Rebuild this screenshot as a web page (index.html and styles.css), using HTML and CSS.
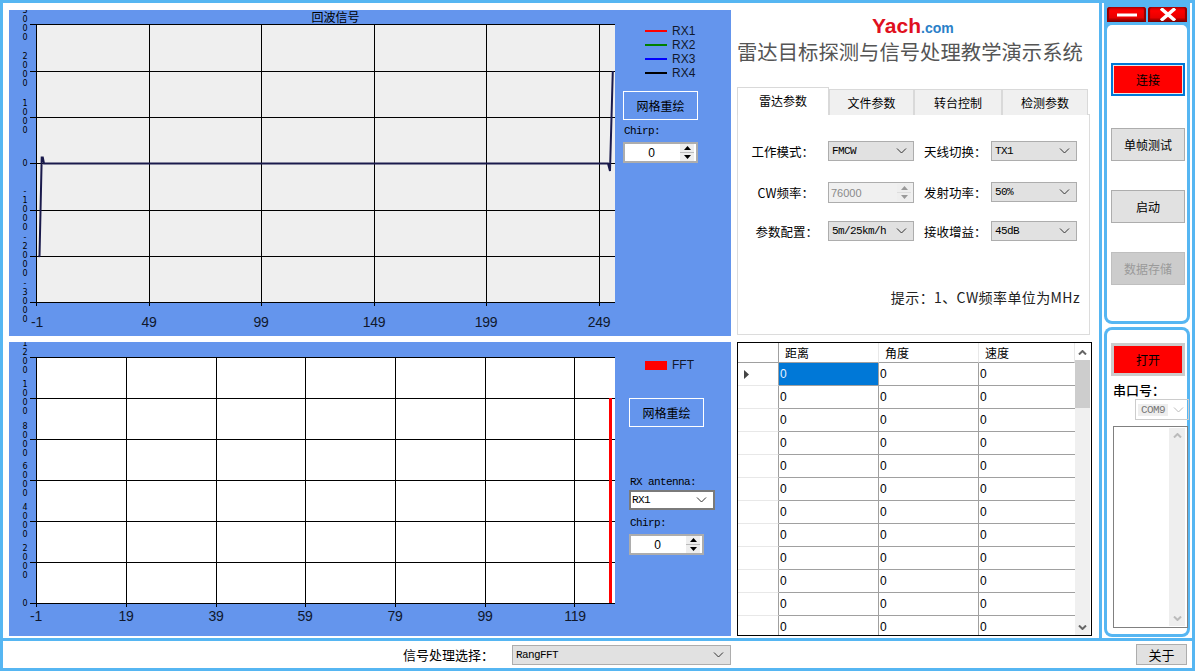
FILE: index.html
```html
<!DOCTYPE html>
<html lang="zh-CN">
<head>
    <meta charset="UTF-8">
    <meta name="viewport" content="width=device-width, initial-scale=1.0">
    <title>雷达目标探测与信号处理教学演示系统</title>
    <link rel="stylesheet" href="styles.css">
</head>
<body>
    <svg class="defs" width="0" height="0">
        <symbol id="chev" viewBox="0 0 11 6"><path d="M1 .5 5.5 5 10 .5" fill="none" stroke="currentColor" stroke-width="1"/></symbol>
        <symbol id="chev-bold" viewBox="0 0 9 5"><path d="M1 .5 4.5 4 8 .5" fill="none" stroke="currentColor" stroke-width="2"/></symbol>
        <symbol id="up" viewBox="0 0 7 4"><path d="M3.5 0 7 4H0z"/></symbol>
        <symbol id="down" viewBox="0 0 7 4"><path d="M0 0H7L3.5 4z"/></symbol>
    </svg>

    <div class="app">
        <div class="main">
            <div class="workspace">

                <!-- echo signal chart -->
                <section class="chart-panel">
                    <svg class="plot" width="613" height="326" viewBox="9 10 613 326">
                        <rect class="plot-bg-grey" x="36" y="24" width="579" height="278"/>
                        <path class="grid" d="M36.5 24V306M149.5 24V306M261.5 24V306M374.5 24V306M486.5 24V306M599.5 24V306M30 24.5H615M30 71.5H615M30 117.5H615M30 163.5H615M30 210.5H615M30 256.5H615M30 302.5H615"/>
                        <polyline class="signal" points="38.5,256.5 39.5,256 41.7,157.5 42.8,157.5 44,163.5 608,163.5 610,171 612.8,71"/>
                        <text class="plot-title" x="335.5" y="22">回波信号</text>
                        <g class="y-label">
                            <text y="13"><tspan x="25">3</tspan><tspan x="25" dy="9">0</tspan><tspan x="25" dy="9">0</tspan><tspan x="25" dy="9">0</tspan></text>
                            <text y="59"><tspan x="25">2</tspan><tspan x="25" dy="9">0</tspan><tspan x="25" dy="9">0</tspan><tspan x="25" dy="9">0</tspan></text>
                            <text y="106"><tspan x="25">1</tspan><tspan x="25" dy="9">0</tspan><tspan x="25" dy="9">0</tspan><tspan x="25" dy="9">0</tspan></text>
                            <text x="25" y="166">0</text>
                            <text y="194"><tspan x="25">-</tspan><tspan x="25" dy="9">1</tspan><tspan x="25" dy="9">0</tspan><tspan x="25" dy="9">0</tspan><tspan x="25" dy="9">0</tspan></text>
                            <text y="240"><tspan x="25">-</tspan><tspan x="25" dy="9">2</tspan><tspan x="25" dy="9">0</tspan><tspan x="25" dy="9">0</tspan><tspan x="25" dy="9">0</tspan></text>
                            <text y="286"><tspan x="25">-</tspan><tspan x="25" dy="9">3</tspan><tspan x="25" dy="9">0</tspan><tspan x="25" dy="9">0</tspan><tspan x="25" dy="9">0</tspan></text>
                        </g>
                        <g class="x-label">
                            <text x="37" y="327">-1</text>
                            <text x="149" y="327">49</text>
                            <text x="261" y="327">99</text>
                            <text x="374" y="327">149</text>
                            <text x="486" y="327">199</text>
                            <text x="599" y="327">249</text>
                        </g>
                    </svg>
                    <div class="chart-side">
                        <ul class="legend">
                            <li><i class="legend-line rx1"></i>RX1</li>
                            <li><i class="legend-line rx2"></i>RX2</li>
                            <li><i class="legend-line rx3"></i>RX3</li>
                            <li><i class="legend-line rx4"></i>RX4</li>
                        </ul>
                        <button class="btn-outline">网格重绘</button>
                        <label class="mono-label">Chirp:</label>
                        <div class="spinner">
                            <span class="spinner-value">0</span>
                            <span class="spin-btns">
                                <span><svg width="7" height="4"><use href="#up"/></svg></span>
                                <span><svg width="7" height="4"><use href="#down"/></svg></span>
                            </span>
                        </div>
                    </div>
                </section>

                <!-- title and parameter tabs -->
                <section class="info-panel">
                    <div class="logo"><span class="logo-name">Yach</span><span class="logo-domain">.com</span></div>
                    <h1 class="app-title">雷达目标探测与信号处理教学演示系统</h1>
                    <div class="tabs">
                        <div class="tab active">雷达参数</div>
                        <div class="tab tab-file">文件参数</div>
                        <div class="tab tab-turn">转台控制</div>
                        <div class="tab tab-detect">检测参数</div>
                    </div>
                    <div class="tab-body">
                        <div class="form-grid">
                            <label>工作模式：</label>
                            <div class="combo"><span>FMCW</span><svg width="11" height="6"><use href="#chev"/></svg></div>
                            <label class="label-right">天线切换：</label>
                            <div class="combo"><span>TX1</span><svg width="11" height="6"><use href="#chev"/></svg></div>

                            <label>CW频率：</label>
                            <div class="freq-input">
                                <span>76000</span>
                                <span class="spin-btns">
                                    <span><svg width="7" height="4"><use href="#up"/></svg></span>
                                    <span><svg width="7" height="4"><use href="#down"/></svg></span>
                                </span>
                            </div>
                            <label class="label-right">发射功率：</label>
                            <div class="combo"><span>50%</span><svg width="11" height="6"><use href="#chev"/></svg></div>

                            <label class="label-shift">参数配置：</label>
                            <div class="combo"><span>5m/25km/h</span><svg width="11" height="6"><use href="#chev"/></svg></div>
                            <label class="label-right">接收增益：</label>
                            <div class="combo"><span>45dB</span><svg width="11" height="6"><use href="#chev"/></svg></div>
                        </div>
                        <p class="hint">提示：1、CW频率单位为MHz</p>
                    </div>
                </section>

                <!-- FFT chart -->
                <section class="chart-panel">
                    <svg class="plot" width="613" height="294" viewBox="9 342 613 294">
                        <rect class="plot-bg-white" x="36" y="357" width="579" height="246"/>
                        <path class="grid" d="M36.5 357V607M126.5 357V607M216.5 357V607M305.5 357V607M395.5 357V607M485.5 357V607M574.5 357V607M30 357.5H615M30 398.5H615M30 439.5H615M30 480.5H615M30 521.5H615M30 562.5H615M30 603.5H615"/>
                        <rect class="fft-bar" x="609" y="398" width="3" height="205"/>
                        <g class="y-label">
                            <text y="346"><tspan x="25">1</tspan><tspan x="25" dy="9">2</tspan><tspan x="25" dy="9">0</tspan><tspan x="25" dy="9">0</tspan></text>
                            <text y="387"><tspan x="25">1</tspan><tspan x="25" dy="9">0</tspan><tspan x="25" dy="9">0</tspan><tspan x="25" dy="9">0</tspan></text>
                            <text y="429"><tspan x="25">8</tspan><tspan x="25" dy="9">0</tspan><tspan x="25" dy="9">0</tspan><tspan x="25" dy="9">0</tspan></text>
                            <text y="469"><tspan x="25">6</tspan><tspan x="25" dy="9">0</tspan><tspan x="25" dy="9">0</tspan><tspan x="25" dy="9">0</tspan></text>
                            <text y="510"><tspan x="25">4</tspan><tspan x="25" dy="9">0</tspan><tspan x="25" dy="9">0</tspan><tspan x="25" dy="9">0</tspan></text>
                            <text y="551"><tspan x="25">2</tspan><tspan x="25" dy="9">0</tspan><tspan x="25" dy="9">0</tspan><tspan x="25" dy="9">0</tspan></text>
                            <text x="25" y="606">0</text>
                        </g>
                        <g class="x-label">
                            <text x="36" y="621">-1</text>
                            <text x="126" y="621">19</text>
                            <text x="216" y="621">39</text>
                            <text x="305" y="621">59</text>
                            <text x="395" y="621">79</text>
                            <text x="485" y="621">99</text>
                            <text x="575" y="621">119</text>
                        </g>
                    </svg>
                    <div class="chart-side chart-side-fft">
                        <ul class="legend">
                            <li><i class="legend-swatch"></i>FFT</li>
                        </ul>
                        <button class="btn-outline">网格重绘</button>
                        <label class="mono-label label-rx">RX antenna:</label>
                        <div class="combo combo-rx"><span>RX1</span><svg width="11" height="6"><use href="#chev"/></svg></div>
                        <label class="mono-label">Chirp:</label>
                        <div class="spinner">
                            <span class="spinner-value">0</span>
                            <span class="spin-btns">
                                <span><svg width="7" height="4"><use href="#up"/></svg></span>
                                <span><svg width="7" height="4"><use href="#down"/></svg></span>
                            </span>
                        </div>
                    </div>
                </section>

                <!-- result grid -->
                <section class="grid-view">
                    <table>
                        <thead>
                            <tr><th class="row-head"></th><th>距离</th><th>角度</th><th>速度</th></tr>
                        </thead>
                        <tbody>
                            <tr class="selected"><td class="row-head"><svg class="row-arrow" width="5" height="9"><path d="M0 0 5 4.5 0 9z"/></svg></td><td>0</td><td>0</td><td>0</td></tr>
                            <tr><td class="row-head"></td><td>0</td><td>0</td><td>0</td></tr>
                            <tr><td class="row-head"></td><td>0</td><td>0</td><td>0</td></tr>
                            <tr><td class="row-head"></td><td>0</td><td>0</td><td>0</td></tr>
                            <tr><td class="row-head"></td><td>0</td><td>0</td><td>0</td></tr>
                            <tr><td class="row-head"></td><td>0</td><td>0</td><td>0</td></tr>
                            <tr><td class="row-head"></td><td>0</td><td>0</td><td>0</td></tr>
                            <tr><td class="row-head"></td><td>0</td><td>0</td><td>0</td></tr>
                            <tr><td class="row-head"></td><td>0</td><td>0</td><td>0</td></tr>
                            <tr><td class="row-head"></td><td>0</td><td>0</td><td>0</td></tr>
                            <tr><td class="row-head"></td><td>0</td><td>0</td><td>0</td></tr>
                            <tr><td class="row-head"></td><td>0</td><td>0</td><td>0</td></tr>
                        </tbody>
                    </table>
                    <div class="scrollbar">
                        <span class="scroll-arrow"><svg width="9" height="5"><use href="#chev-bold"/></svg></span>
                        <span class="scroll-thumb"></span>
                        <span class="scroll-arrow arrow-end"><svg width="9" height="5"><use href="#chev-bold"/></svg></span>
                    </div>
                </section>
            </div>

            <aside class="sidebar">
                <div class="frame frame-top">
                    <div class="win-buttons">
                        <span class="win-btn"><svg width="22" height="10"><path d="M1 5H21" stroke="#fff" stroke-width="3"/></svg></span>
                        <span class="win-btn"><svg width="18" height="13"><path d="M2 .5 16 12.500M16 .5 2 12.500" stroke="#fff" stroke-width="3.500"/></svg></span>
                    </div>
                    <div class="frame-body actions">
                        <button class="btn btn-connect">连接</button>
                        <button class="btn">单帧测试</button>
                        <button class="btn">启动</button>
                        <button class="btn btn-disabled">数据存储</button>
                    </div>
                </div>
                <div class="frame frame-serial">
                    <div class="frame-body serial">
                        <button class="btn btn-open">打开</button>
                        <label class="serial-label">串口号：</label>
                        <div class="com-combo"><span>COM9</span><svg width="11" height="6"><use href="#chev"/></svg></div>
                        <div class="log-box">
                            <div class="log-scroll">
                                <svg width="9" height="5"><use href="#chev-bold"/></svg>
                                <svg width="9" height="5"><use href="#chev-bold"/></svg>
                            </div>
                        </div>
                    </div>
                </div>
            </aside>
        </div>

        <footer class="footer">
            <label class="footer-label">信号处理选择：</label>
            <div class="combo combo-mode"><span>RangFFT</span><svg width="11" height="6"><use href="#chev"/></svg></div>
            <button class="btn-about">关于</button>
        </footer>
    </div>
</body>
</html>
```

FILE: styles.css
```css
* {
    box-sizing: border-box;
}

body {
    margin: 0;
    background-color: #fff;
    color: #000;
    font-family: "Noto Sans CJK SC", "Liberation Sans", sans-serif;
    font-size: 12px;
}

button {
    font-family: inherit;
    font-size: 12px;
    padding: 0;
}

.defs {
    position: absolute;
}

.app {
    display: flex;
    flex-direction: column;
    width: 1195px;
    height: 671px;
    border: 3px solid #56b6f2;
    overflow: hidden;
}

.main {
    display: flex;
    height: 638px;
    border-bottom: 3px solid #56b6f2;
}

.workspace {
    display: grid;
    grid-template-columns: 722px 355px;
    grid-template-rows: 326px 294px;
    gap: 6px;
    width: 1096px;
    padding: 7px 0 0 6px;
}

/* charts */
.chart-panel {
    display: flex;
    background-color: #6495ed;
    overflow: hidden;
}

.plot {
    flex: none;
    display: block;
}

.plot-bg-grey {
    fill: #efefef;
}

.plot-bg-white {
    fill: #fff;
}

.grid {
    fill: none;
    stroke: #000;
    stroke-width: 1;
}

.signal {
    fill: none;
    stroke: #1a1a4c;
    stroke-width: 2;
}

.fft-bar {
    fill: #f00;
}

.plot-title {
    font-size: 12px;
    text-anchor: middle;
}

.y-label text {
    font-family: "DejaVu Sans", sans-serif;
    font-size: 8px;
    text-anchor: middle;
}

.x-label text {
    font-family: "Liberation Sans", sans-serif;
    font-size: 14px;
    letter-spacing: -.3px;
    fill: #10182c;
    text-anchor: middle;
}

.chart-side {
    flex: none;
    width: 96px;
    padding: 14px 0 0 1px;
}

.chart-side-fft {
    padding: 16px 0 0 7px;
}

.legend {
    list-style: none;
    margin: 0 0 11px;
    padding: 0 0 0 22px;
    font-family: "Liberation Sans", sans-serif;
    color: #10182c;
}

.legend li {
    display: flex;
    align-items: center;
    gap: 5px;
    height: 14px;
}

.legend-line {
    width: 22px;
    height: 2px;
}

.rx1 { background-color: #f00; }
.rx2 { background-color: #008000; }
.rx3 { background-color: #00f; }
.rx4 { background-color: #000; }

.legend-swatch {
    width: 22px;
    height: 9px;
    background-color: #f00;
}

.chart-side-fft .legend {
    margin-bottom: 26px;
    padding-left: 16px;
}

.btn-outline {
    display: block;
    width: 75px;
    height: 29px;
    border: 1px solid #fff;
    background: transparent;
    color: #000;
}

.mono-label {
    display: block;
    height: 22px;
    padding: 4px 0 0 1px;
    font-family: "Liberation Mono", monospace;
    font-size: 11px;
    letter-spacing: -.6px;
    line-height: 14px;
}

.label-rx {
    margin-top: 47px;
    height: 16px;
    padding-top: 1px;
}

.spinner {
    display: flex;
    align-items: center;
    width: 75px;
    height: 21px;
    border: 2px solid #adadad;
    background-color: #fff;
}

.spinner-value {
    width: 53px;
    text-align: center;
    font-family: "Liberation Sans", sans-serif;
    font-size: 12px;
}

.spin-btns {
    display: flex;
    flex-direction: column;
    gap: 1px;
    width: 14px;
    height: 17px;
    background-color: #bbb;
    margin-left: 2px;
}

.spin-btns span {
    display: flex;
    flex: 1;
    align-items: center;
    justify-content: center;
    background-color: #eee;
}

.spin-btns svg {
    display: block;
}

/* combo boxes */
.combo {
    display: flex;
    align-items: center;
    justify-content: space-between;
    width: 86px;
    height: 20px;
    padding: 0 6px 0 3px;
    border: 1px solid #adadad;
    background-color: #e1e1e1;
    font-family: "Liberation Mono", monospace;
    font-size: 11px;
    letter-spacing: -.6px;
    color: #333;
}

.combo span {
    color: #000;
}

.combo-rx {
    margin-bottom: 2px;
    border: 2px solid #7a7a7a;
    background-color: #fff;
    padding-left: 1px;
}

/* title and tabs */
.info-panel {
    width: 353px;
    padding-top: 6px;
}

.logo {
    height: 20px;
    padding-left: 135px;
    line-height: 20px;
    font-family: "Liberation Sans", sans-serif;
}

.logo-name {
    font-size: 21px;
    font-weight: bold;
    color: #e01020;
}

.logo-domain {
    font-size: 14px;
    font-weight: bold;
    color: #2a80c8;
}

.app-title {
    margin: 0;
    height: 51px;
    font-size: 20.35px;
    font-weight: 400;
    line-height: 30px;
    color: #555;
    white-space: nowrap;
}

.tabs {
    display: flex;
    align-items: flex-end;
    height: 28px;
    position: relative;
    z-index: 1;
}

.tab {
    height: 26px;
    border: 1px solid #d9d9d9;
    border-bottom: 0;
    background-color: #f0f0f0;
    text-align: center;
    line-height: 26px;
}

.tab.active {
    width: 92px;
    height: 28px;
    background-color: #fff;
}

.tab-file { width: 85px; }
.tab-turn { width: 88px; }
.tab-detect { width: 86px; }

.tab-body {
    width: 353px;
    height: 221px;
    margin-top: -1px;
    padding-top: 26px;
    border: 1px solid #dcdcdc;
    background-color: #fff;
}

.form-grid {
    display: grid;
    grid-template-columns: 76px 100px 73px 90px;
    grid-template-rows: 41px 39px 21px;
    align-items: start;
}

.form-grid label {
    font-size: 12.5px;
    line-height: 21px;
    text-align: right;
    white-space: nowrap;
}

.form-grid .label-right {
    padding-left: 10px;
    text-align: left;
}

.form-grid .label-shift {
    margin-right: -4px;
}

.form-grid .combo,
.form-grid .freq-input {
    justify-self: end;
}

.freq-input {
    display: flex;
    align-items: center;
    justify-content: space-between;
    width: 86px;
    height: 21px;
    padding: 0 2px;
    border: 1px solid #adadad;
    background-color: #f0f0f0;
    font-family: "Liberation Sans", sans-serif;
    font-size: 11px;
    color: #8a8a8a;
}

.freq-input .spin-btns {
    margin: 0;
    background-color: #ddd;
}

.freq-input svg {
    fill: #999;
}

.hint {
    margin: 45px 9px 0 0;
    font-size: 14px;
    letter-spacing: .4px;
    line-height: 20px;
    text-align: right;
    color: #222;
}

/* data grid */
.grid-view {
    position: relative;
    width: 355px;
    height: 294px;
    border: 1px solid #000;
    overflow: hidden;
    background-color: #fff;
}

.grid-view table {
    width: 336px;
    border-collapse: separate;
    border-spacing: 0;
    table-layout: fixed;
}

.grid-view th {
    width: 100px;
    height: 20px;
    padding: 0 0 0 6px;
    border-right: 1px solid #e8e8e8;
    border-bottom: 1px solid #a0a0a0;
    font-weight: 400;
    font-size: 12px;
    text-align: left;
    line-height: 18px;
}

.grid-view th:last-child {
    width: 96px;
}

.grid-view th.row-head {
    width: 41px;
    border-right: 1px solid #a0a0a0;
}

.grid-view td {
    height: 23px;
    padding: 1px 0 0 1px;
    border-right: 1px solid #a0a0a0;
    border-bottom: 1px solid #a0a0a0;
    font-family: "Liberation Sans", sans-serif;
    font-size: 12px;
    line-height: 21px;
}

.grid-view td:last-child {
    border-right: 0;
}

.grid-view td.row-head {
    padding-left: 6px;
    border-bottom-color: #e8e8e8;
}

.selected td:nth-child(2) {
    background-color: #0078d7;
    color: #e8f2ff;
}

.row-arrow {
    display: block;
    fill: #444;
}

.scrollbar {
    position: absolute;
    top: 1px;
    right: 1px;
    display: flex;
    flex-direction: column;
    width: 15px;
    height: 291px;
    background-color: #f0f0f0;
}

.scroll-arrow {
    display: flex;
    align-items: center;
    justify-content: center;
    height: 16px;
    color: #666;
    background-color: #fff;
}

.scroll-arrow svg {
    transform: rotate(180deg);
}

.arrow-end {
    margin-top: auto;
    background-color: #f0f0f0;
}

.arrow-end svg {
    transform: none;
}

.scroll-thumb {
    height: 48px;
    background-color: #cdcdcd;
}

/* right column */
.sidebar {
    flex: none;
    width: 93px;
    padding: 0 2px;
    border-left: 3px solid #56b6f2;
}

.frame {
    width: 86px;
    padding: 3px;
    border-radius: 8px;
    background-color: #56b6f2;
}

.frame-body {
    height: 100%;
    border-radius: 5px;
    background-color: #fff;
}

.frame-top {
    height: 321px;
    padding-top: 4px;
    border-radius: 0 0 8px 8px;
}

.win-buttons {
    display: flex;
    gap: 2px;
    height: 15px;
    margin-bottom: 3px;
}

.win-btn {
    display: flex;
    align-items: center;
    justify-content: center;
    width: 39px;
    height: 15px;
    border-radius: 3px 3px 0 0;
    background: linear-gradient(#b00000, #f00 25%, #e80000 70%, #6a0000);
    box-shadow: inset 2px 0 1px #900000, inset -2px 0 1px #900000;
}

.frame-top .frame-body {
    height: 296px;
}

.actions {
    display: flex;
    flex-direction: column;
    gap: 29px;
    padding: 38px 0 0 4px;
}

.btn {
    flex: none;
    width: 74px;
    height: 33px;
    border: 1px solid #adadad;
    background-color: #e1e1e1;
    color: #000;
}

.btn-connect {
    margin-bottom: 3px;
    border: 2px solid #0078d7;
    background-color: #f00;
    box-shadow: inset 0 0 0 1px #e8e8e8;
}

.btn-disabled {
    border-color: #bfbfbf;
    background-color: #ccc;
    color: #9a9a9a;
}

.frame-serial {
    height: 310px;
    margin-top: 3px;
}

.serial {
    padding: 13px 0 0 4px;
}

.btn-open {
    display: block;
    border: 3px solid #ccc;
    background-color: #f00;
}

.serial-label {
    display: block;
    height: 24px;
    padding: 6px 0 0 2px;
    font-size: 13px;
    font-weight: 500;
    line-height: 16px;
}

.com-combo {
    display: flex;
    align-items: center;
    justify-content: space-between;
    width: 54px;
    height: 21px;
    margin-top: -1px;
    margin-left: 24px;
    padding: 0 4px 0 2px;
    border: 1px solid #ccc;
    color: #bbb;
    font-family: "Liberation Mono", monospace;
    font-size: 11px;
    letter-spacing: -.6px;
}

.com-combo span {
    padding: 0 3px;
    background-color: #eee;
    color: #777;
}

.log-box {
    display: flex;
    justify-content: flex-end;
    width: 75px;
    height: 202px;
    margin: 6px 0 0 2px;
    padding: 1px;
    border: 1px solid #808080;
    background-color: #fff;
}

.log-scroll {
    display: flex;
    flex-direction: column;
    align-items: center;
    justify-content: space-between;
    width: 16px;
    margin-right: 1px;
    padding: 5px 0;
    background-color: #eee;
    color: #bbb;
}

.log-scroll svg:first-child {
    transform: rotate(180deg);
}

/* bottom bar */
.footer {
    display: flex;
    align-items: center;
    height: 27px;
    padding-left: 400px;
}

.footer-label {
    width: 109px;
    font-size: 13px;
    white-space: nowrap;
}

.combo-mode {
    width: 219px;
}

.btn-about {
    width: 51px;
    height: 21px;
    margin-left: 405px;
    border: 1px solid #adadad;
    background-color: #e1e1e1;
    color: #000;
    font-size: 13px;
}
```
